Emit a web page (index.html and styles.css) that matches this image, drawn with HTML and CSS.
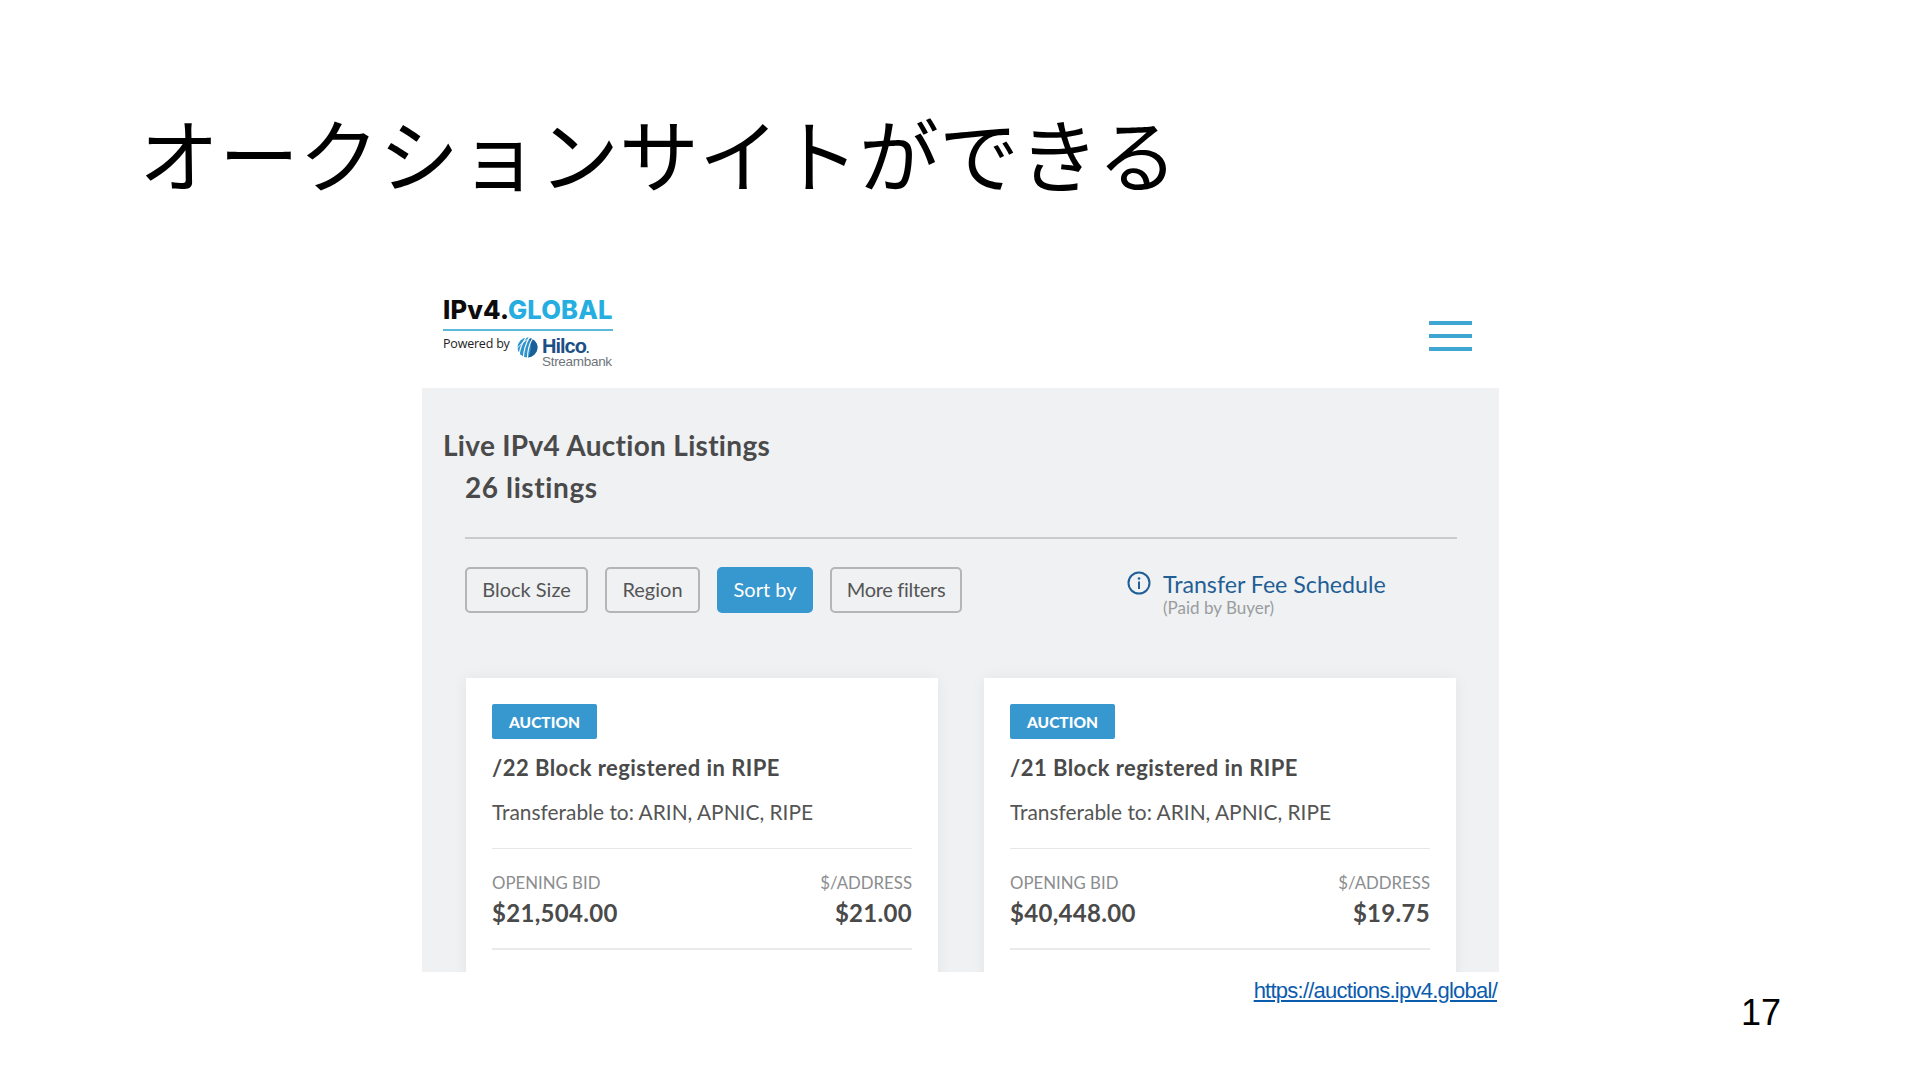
FILE: index.html
```html
<!DOCTYPE html>
<html lang="ja">
<head>
<meta charset="utf-8">
<title>オークションサイトができる</title>
<link rel="stylesheet" href="styles.css">
</head>
<body>
<main class="slide">
  <h1 class="slide-title">オークションサイトができる</h1>
  <section class="shot">
    <header class="site-head">
      <div class="logo">
        <div class="logo-main"><span class="logo-black">IPv4.</span><span class="logo-cyan">GLOBAL</span></div>
        <div class="logo-sub">
          <span class="powered">Powered by</span>
          <svg class="hilco-mark" viewBox="0 0 20 20" aria-hidden="true">
            <ellipse cx="10" cy="10" rx="9.500" ry="9.500" fill="#2f93cc"/>
            <path d="M11 0.500C15 2 20 5 19.500 10C19.500 15 15 19 10.500 19.500C14 14 14 6 11 0.500Z" fill="#1c5f97"/>
            <path d="M9 0C6 4 3 9 2 17M12 0C9 5 6.500 11 6 20M15 1C12 6 10 13 10 20" fill="none" stroke="#fff" stroke-width="1.100"/>
            <path d="M0 11C3 7 8 3 14 0" fill="none" stroke="#fff" stroke-width="0.800"/>
          </svg>
          <div class="hilco">
            <span class="hilco-name">Hilco<span class="hilco-dot">.</span></span>
            <span class="hilco-stream">Streambank</span>
          </div>
        </div>
      </div>
      <div class="burger" aria-hidden="true"><i></i><i></i><i></i></div>
    </header>
    <div class="panel">
      <h2 class="panel-title">Live IPv4 Auction Listings</h2>
      <div class="panel-body">
        <p class="count">26 listings</p>
        <hr class="rule">
        <div class="toolbar">
          <div class="filters">
            <span class="btn">Block Size</span>
            <span class="btn">Region</span>
            <span class="btn btn-on">Sort by</span>
            <span class="btn btn-more">More filters</span>
          </div>
          <div class="fee">
            <svg class="info" viewBox="0 0 24 24" aria-hidden="true">
              <circle cx="12" cy="12" r="10.500" fill="none" stroke="#1f5f96" stroke-width="2"/>
              <circle cx="12" cy="7.500" r="1.300" fill="#1f5f96"/>
              <rect x="11" y="10.500" width="2" height="7.500" fill="#1f5f96"/>
            </svg>
            <div class="fee-text">
              <span class="fee-link">Transfer Fee Schedule</span>
              <span class="fee-note">(Paid by Buyer)</span>
            </div>
          </div>
        </div>
        <div class="cards">
          <article class="card">
            <span class="badge">AUCTION</span>
            <h3 class="card-title">/22 Block registered in RIPE</h3>
            <p class="card-sub">Transferable to: ARIN, APNIC, RIPE</p>
            <div class="stats">
              <div><span class="label">OPENING BID</span><strong class="value">$21,504.00</strong></div>
              <div class="right"><span class="label">$/ADDRESS</span><strong class="value">$21.00</strong></div>
            </div>
          </article>
          <article class="card">
            <span class="badge">AUCTION</span>
            <h3 class="card-title">/21 Block registered in RIPE</h3>
            <p class="card-sub">Transferable to: ARIN, APNIC, RIPE</p>
            <div class="stats">
              <div><span class="label">OPENING BID</span><strong class="value">$40,448.00</strong></div>
              <div class="right"><span class="label">$/ADDRESS</span><strong class="value">$19.75</strong></div>
            </div>
          </article>
        </div>
      </div>
    </div>
  </section>
  <div class="source"><a class="source-link" href="#">https://auctions.ipv4.global/</a></div>
  <span class="page-no">17</span>
</main>
</body>
</html>
```

FILE: styles.css
```css
* { box-sizing: border-box; }
html, body { margin: 0; padding: 0; background: #fff; }
.slide {
  position: relative;
  width: 1920px;
  height: 1080px;
  overflow: hidden;
  padding-top: 96px;
  font-family: Lato, "Liberation Sans", sans-serif;
}
.slide-title {
  margin: 0 0 0 139px;
  height: 194px;
  font: 400 80px/110px "Noto Sans CJK JP", sans-serif;
  color: #000;
  white-space: nowrap;
}
.shot {
  width: 1077px;
  height: 682px;
  margin-left: 422px;
  overflow: hidden;
  display: flex;
  flex-direction: column;
}
.site-head {
  height: 98px;
  flex: none;
  display: flex;
  justify-content: space-between;
  align-items: flex-start;
  padding: 7px 27px 0 21px;
}
.logo { width: 170px; }
.logo-main {
  font: 800 25.500px/26px Inter, sans-serif;
  letter-spacing: 0.17px;
  white-space: nowrap;
  border-bottom: 2px solid #5db8dc;
  padding-bottom: 6px;
  height: 34px;
}
.logo-black { color: #0c0c0c; }
.logo-cyan { color: #27aee0; }
.logo-sub { display: flex; align-items: flex-start; margin-top: 5px; }
.powered {
  font: 400 12.500px/16px "Open Sans", sans-serif;
  color: #222;
  width: 74px;
  flex: none;
  white-space: nowrap;
  letter-spacing: -0.2px;
}
.hilco-mark { width: 21px; height: 21px; flex: none; margin-top: 1px; }
.hilco { display: flex; flex-direction: column; margin-left: 4px; }
.hilco-name {
  font: 700 20px/21px "Liberation Sans", sans-serif;
  color: #1c4f86;
  letter-spacing: -1px;
  white-space: nowrap;
}
.hilco-dot { font-size: 12px; }
.hilco-stream {
  font: 400 13.500px/10px "Liberation Sans", sans-serif;
  color: #6e7579;
  white-space: nowrap;
  letter-spacing: -0.3px;
  margin-top: -3px;
}
.burger { display: flex; flex-direction: column; gap: 9px; margin-top: 24px; }
.burger i { display: block; width: 43px; height: 4px; background: #3fa6d2; }
.panel {
  flex: 1;
  background: #eff1f3;
  color: #4a4a4a;
  padding-top: 40px;
}
.panel-title {
  margin: 0 0 0 21px;
  font: 700 28px/34px Lato, sans-serif;
  letter-spacing: 0.3px;
  color: #4a4a4a;
  white-space: nowrap;
}
.panel-body { padding: 0 42px 0 43px; }
.count {
  margin: 8px 0 0;
  font: 700 28px/34px Lato, sans-serif;
  letter-spacing: 0.6px;
  color: #4a4a4a;
}
.rule { margin: 33px 0 0; border: 0; border-top: 2px solid #c9cbcd; }
.toolbar { display: flex; margin-top: 28px; }
.filters {
  display: grid;
  grid-template-columns: 123px 95px 96px 132px;
  gap: 17px;
  width: 662px;
  flex: none;
}
.btn {
  display: flex;
  align-items: center;
  justify-content: center;
  height: 46px;
  padding-bottom: 2px;
  border: 2px solid #b3b5b7;
  border-radius: 5px;
  font-size: 20px;
  color: #555;
  white-space: nowrap;
}
.btn-more { letter-spacing: -0.3px; }
.btn-on { background: #3797cf; border-color: #3797cf; color: #fff; }
.fee { display: flex; align-items: flex-start; gap: 12px; margin-top: 5px; }
.info { width: 24px; height: 24px; flex: none; margin-top: -1px; }
.fee-text { display: flex; flex-direction: column; }
.fee-link { font-size: 23.200px; line-height: 24px; color: #1f5f96; white-space: nowrap; }
.fee-note { font-size: 17px; line-height: 20px; color: #9a9c9e; margin-top: 2px; }
.cards { display: flex; gap: 46px; margin: 60px 0 0 1px; }
.card {
  width: 472px;
  flex: none;
  height: 320px;
  background: #fff;
  padding: 26px 26px 0;
  box-shadow: 0 0 14px rgba(0, 0, 0, 0.06);
}
.badge {
  display: flex;
  align-items: center;
  justify-content: center;
  width: 105px;
  height: 35px;
  border-radius: 2px;
  background: #3797cf;
  color: #fff;
  font-size: 15.500px;
  font-weight: 900;
}
.card-title {
  margin: 15px 0 0;
  font: 700 22px/28px Lato, sans-serif;
  letter-spacing: 0.45px;
  color: #4a4a4a;
  white-space: nowrap;
}
.card-sub {
  margin: 16px 0 0;
  font-size: 20.900px;
  line-height: 28px;
  color: #555;
  white-space: nowrap;
}
.stats {
  display: flex;
  justify-content: space-between;
  height: 102px;
  margin-top: 22px;
  padding-top: 24px;
  border-top: 1px solid #e6e7e8;
  border-bottom: 2px solid #e9eaeb;
}
.right { text-align: right; }
.label { display: block; font-size: 16.800px; line-height: 20px; color: #8b8d8f; }
.value { display: block; margin-top: 5px; font-size: 24px; line-height: 30px; font-weight: 700; letter-spacing: 0.3px; color: #4a4a4a; }
.source { width: 1497px; margin-top: 6px; text-align: right; line-height: 26px; }
.source-link {
  font: 400 22px/26px "Liberation Sans", sans-serif;
  color: #0b5cad;
  letter-spacing: -0.76px;
}
.page-no {
  position: absolute;
  left: 1741px;
  top: 991px;
  font: 400 36px/44px "Liberation Sans", sans-serif;
  color: #000;
}
```
